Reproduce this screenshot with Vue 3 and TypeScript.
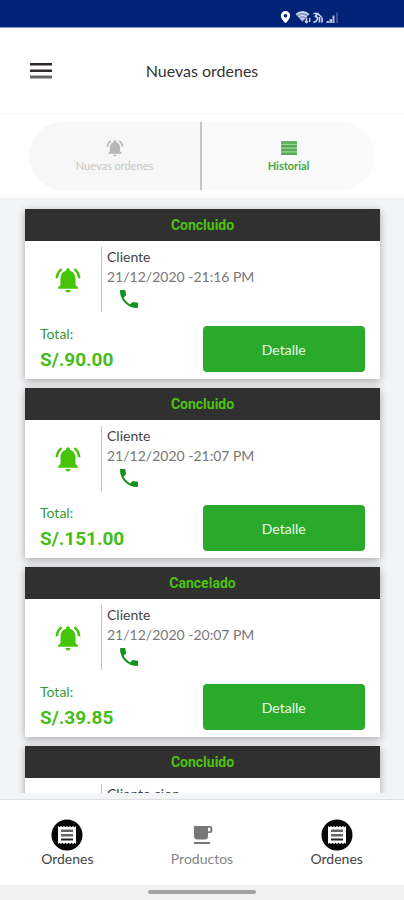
<script setup lang="ts">
import { ref } from 'vue'

interface Order {
  id: number
  status: string
  client: string
  date?: string
  total?: string
}

const orders: Order[] = [
  { id: 1, status: 'Concluido', client: 'Cliente', date: '21/12/2020 -21:16 PM', total: 'S/.90.00' },
  { id: 2, status: 'Concluido', client: 'Cliente', date: '21/12/2020 -21:07 PM', total: 'S/.151.00' },
  { id: 3, status: 'Cancelado', client: 'Cliente', date: '21/12/2020 -20:07 PM', total: 'S/.39.85' },
  { id: 4, status: 'Concluido', client: 'Cliente cion' },
]

const activeTab = ref<'new' | 'history'>('history')

const bellPath =
  'M7.58 4.08 6.15 2.65C3.75 4.48 2.17 7.3 2.03 10.5h2c.15-2.65 1.51-4.97 3.55-6.42zm12.39 6.42h2c-.15-3.2-1.73-6.02-4.12-7.85l-1.42 1.43c2.02 1.45 3.39 3.77 3.54 6.42zM18 11c0-3.07-1.64-5.64-4.5-6.32V4c0-.83-.67-1.5-1.5-1.5s-1.5.67-1.5 1.5v.68C7.63 5.36 6 7.92 6 11v5l-2 2v1h16v-1l-2-2v-5zm-6 11c.14 0 .27-.01.4-.04.65-.14 1.18-.58 1.44-1.18.1-.24.15-.5.15-.78h-4c.01 1.1.9 2 2.01 2z'
</script>

<template>
  <div class="screen">
    <div class="status-bar">
      <svg class="status-icons" viewBox="0 0 60 14" aria-hidden="true">
        <path fill="#fff" fill-rule="evenodd" d="M5.500 1a4.700 4.700 0 0 0-4.700 4.700C.8 9.200 5.500 13 5.500 13s4.700-3.800 4.700-7.300A4.700 4.700 0 0 0 5.500 1zm0 3a1.800 1.800 0 1 1 0 3.600 1.800 1.800 0 0 1 0-3.600z" />
        <path fill="#8e9ccb" d="M16 4.500q6.500-5.500 13 0L22.500 12z" />
        <g fill="none" stroke="#d5dcf0" stroke-width="1.300">
          <path d="M16 4.500q6.500-5.500 13 0M18.500 7q4-3.200 8 0M20.500 9.200q2-1.500 4 0" />
          <path d="M26.500 8v5M25 11l1.500 1.800L28 11M29.700 12V8" />
          <path stroke-width="1.600" d="M33.500 3.500h4l-2 3q3 .5 1.500 3.500t-3.500 1.500M38 4l3.500 3M39.500 7v5.500M42 12.500V7.500" />
        </g>
        <path fill="#b4bede" d="M46.500 13v-2H49v2zM49.500 13V9H52v4zM52.500 13V5.500H54.500V13z" />
        <path fill="#7080b8" d="M56.500 2.500h1V13h-1z" />
      </svg>
    </div>

    <header class="app-header">
      <button class="menu-button" type="button" aria-label="Menu">
        <svg viewBox="0 0 22 16" aria-hidden="true">
          <path fill="#2d292b" d="M0 0h22v2.500H0zM0 6.500h22V9H0z" />
          <path fill="#666" d="M0 12.500h22v3H0z" />
        </svg>
      </button>
      <h1 class="title">Nuevas ordenes</h1>
    </header>

    <div class="tabs-bar">
      <div class="tabs">
        <button class="tab" :class="{ active: activeTab === 'new' }" type="button" @click="activeTab = 'new'">
          <svg class="tab-icon" viewBox="0 0 24 24" aria-hidden="true"><path :d="bellPath" /></svg>
          <span>Nuevas ordenes</span>
        </button>
        <button class="tab" :class="{ active: activeTab === 'history' }" type="button" @click="activeTab = 'history'">
          <svg class="tab-icon" viewBox="0 0 24 24" aria-hidden="true">
            <path opacity=".55" d="M2.500 4h19v16h-19z" />
            <path d="M2.500 4h19v3h-19zM2.500 8.500h19v3h-19zM2.500 13h19v3h-19zM2.500 17.500h19v3h-19z" />
          </svg>
          <span>Historial</span>
        </button>
      </div>
    </div>

    <main class="list">
      <article v-for="order in orders" :key="order.id" class="card">
        <h2 class="card-status">{{ order.status }}</h2>
        <div class="card-body">
          <div class="summary">
            <div class="bell">
              <svg v-if="order.date" viewBox="0 0 24 24" aria-hidden="true"><path :d="bellPath" /></svg>
            </div>
            <div class="info">
              <span class="client">{{ order.client }}</span>
              <template v-if="order.date">
                <span class="date">{{ order.date }}</span>
                <button class="call" type="button" aria-label="Llamar">
                  <svg viewBox="0 0 24 24" aria-hidden="true">
                    <path d="M6.620 10.790c1.440 2.830 3.760 5.140 6.590 6.590l2.200-2.200c.27-.27.67-.36 1.020-.24 1.120.37 2.330.57 3.570.57.55 0 1 .45 1 1V20c0 .55-.45 1-1 1-9.390 0-17-7.610-17-17 0-.55.45-1 1-1h3.500c.55 0 1 .45 1 1 0 1.250.2 2.450.57 3.570.11.35.03.74-.25 1.020l-2.200 2.200z" />
                  </svg>
                </button>
              </template>
            </div>
          </div>
          <div v-if="order.total" class="checkout">
            <div class="total">
              <span class="total-label">Total:</span>
              <strong class="amount">{{ order.total }}</strong>
            </div>
            <button class="detail" type="button">Detalle</button>
          </div>
        </div>
      </article>
    </main>

    <nav class="bottom-nav">
      <a class="nav-item" href="#ordenes">
        <svg class="nav-icon" viewBox="0 0 32 32" aria-hidden="true">
          <circle cx="16" cy="16" r="15.500" fill="#080808" />
          <path fill="#fff" d="M7 7l1.500 1.200L10 7l1.500 1.200L13 7l1.500 1.200L16 7l1.500 1.200L19 7l1.500 1.200L22 7l1.500 1.200L25 7v18l-1.500-1.200L22 25l-1.500-1.200L19 25l-1.500-1.200L16 25l-1.500-1.200L13 25l-1.500-1.200L10 25l-1.500-1.200L7 25z" />
          <path fill="#666" d="M10 10.500h12v2.500H10zM10 15h12v2.500H10z" />
          <path fill="#222" d="M10 19.500h12v2H10z" />
        </svg>
        <span>Ordenes</span>
      </a>
      <a class="nav-item muted" href="#productos">
        <svg class="nav-icon" viewBox="0 0 32 32" aria-hidden="true">
          <path fill="#777" fill-rule="evenodd" d="M8 7h16a2.300 2.300 0 0 1 2.300 2.300v2.400A2.300 2.300 0 0 1 24 14h-2v3a3.500 3.500 0 0 1-3.500 3.500h-7A3.500 3.500 0 0 1 8 17zm14 1.800v3.400h2.300V8.800zM8 23h16v2H8z" />
        </svg>
        <span>Productos</span>
      </a>
      <a class="nav-item" href="#mis-ordenes">
        <svg class="nav-icon" viewBox="0 0 32 32" aria-hidden="true">
          <circle cx="16" cy="16" r="15.500" fill="#080808" />
          <path fill="#fff" d="M7 7l1.500 1.200L10 7l1.500 1.200L13 7l1.500 1.200L16 7l1.500 1.200L19 7l1.500 1.200L22 7l1.500 1.200L25 7v18l-1.500-1.200L22 25l-1.500-1.200L19 25l-1.500-1.200L16 25l-1.500-1.200L13 25l-1.500-1.200L10 25l-1.500-1.200L7 25z" />
          <path fill="#666" d="M10 10.500h12v2.500H10zM10 15h12v2.500H10z" />
          <path fill="#222" d="M10 19.500h12v2H10z" />
        </svg>
        <span>Ordenes</span>
      </a>
    </nav>

    <div class="home-bar"><span class="home-pill"></span></div>
  </div>
</template>

<style>
body {
  background: #f3f4f6;
}
</style>

<style scoped>
.screen {
  display: flex;
  flex-direction: column;
  height: 100vh;
  font-family: Lato, 'Liberation Sans', sans-serif;
  color: #444;
  background: #f3f4f6;
}

button {
  padding: 0;
  border: 0;
  background: none;
  font-family: inherit;
  cursor: pointer;
}

svg {
  display: block;
}

.status-bar {
  flex: none;
  display: flex;
  justify-content: flex-end;
  box-sizing: border-box;
  height: 28px;
  padding: 10px 64px 0 0;
  background: #002277;
  border-bottom: 1px solid #8a96c0;
}

.status-icons {
  width: 60px;
  height: 14px;
}

.app-header {
  flex: none;
  display: grid;
  grid-template-columns: 1fr auto 1fr;
  align-items: center;
  height: 85px;
  padding: 0 30px;
  background: #fff;
  border-bottom: 1px solid #f3f3f3;
}

.menu-button {
  justify-self: start;
}

.menu-button svg {
  width: 22px;
  height: 16px;
}

.title {
  margin: 0;
  font-size: 16px;
  line-height: 24px;
  font-weight: 400;
  color: #333;
}

.tabs-bar {
  flex: none;
  padding: 8px 29px;
  background: #fff;
  border-bottom: 1px solid #eeeeee;
}

.tabs {
  display: grid;
  grid-template-columns: 1fr 1fr;
  height: 68px;
  border-radius: 34px;
  background: #fafafa;
  overflow: hidden;
}

.tab {
  display: flex;
  flex-direction: column;
  align-items: center;
  justify-content: center;
  font-size: 11px;
  line-height: 16px;
  color: #c6c6c6;
  fill: #b8b8b8;
}

.tab:first-child {
  background: #f7f7f7;
  border-right: 2px solid #c4c4c4;
}

.tab.active {
  font-weight: 700;
  color: #43a847;
  fill: #55ad58;
}

.tab-icon {
  width: 20px;
  height: 20px;
}

.list {
  flex: 1;
  min-height: 0;
  display: flex;
  flex-direction: column;
  gap: 9px;
  padding: 10px 24px 0 25px;
  margin-bottom: 6px;
  overflow: hidden;
}

.card {
  flex: none;
  background: #fff;
  box-shadow: 0 2px 8px rgba(0, 0, 0, 0.32);
}

.card-status {
  margin: 0;
  font-family: Roboto, 'Liberation Sans', sans-serif;
  font-size: 14px;
  line-height: 32px;
  font-weight: 700;
  text-align: center;
  color: #4bc30f;
  background: #303030;
}

.card-body {
  display: flex;
  flex-direction: column;
  gap: 14px;
  padding: 6px 15px 7px 9px;
}

.summary {
  display: grid;
  grid-template-columns: 67px 1fr;
  height: 65px;
}

.bell {
  display: flex;
  align-items: center;
  justify-content: center;
}

.bell svg {
  width: 30px;
  height: 30px;
  fill: #45c409;
}

.info {
  display: flex;
  flex-direction: column;
  align-items: flex-start;
  padding-left: 5px;
  border-left: 1px solid #c4c4c4;
  font-size: 14px;
  line-height: 20px;
}

.client {
  color: #444;
}

.date {
  color: #777;
}

.call {
  margin-left: 10px;
}

.call svg {
  width: 24px;
  height: 24px;
  fill: #14941d;
}

.checkout {
  display: grid;
  grid-template-columns: 1fr 1fr;
  align-items: center;
  padding-left: 6px;
}

.total {
  display: flex;
  flex-direction: column;
  gap: 6px;
  font-size: 14px;
  line-height: 16px;
  color: #35993a;
}

.amount {
  font-family: Roboto, 'Liberation Sans', sans-serif;
  font-size: 19px;
  line-height: 24px;
  font-weight: 700;
  color: #45bd18;
}

.detail {
  height: 46px;
  border-radius: 4px;
  font-size: 14px;
  color: #eafbea;
  background: #29aa2b;
}

.bottom-nav {
  flex: none;
  display: grid;
  grid-template-columns: repeat(3, 1fr);
  padding: 19px 0 18px;
  background: #fff;
  border-top: 1px solid #dfe0e2;
}

.nav-item {
  display: flex;
  flex-direction: column;
  align-items: center;
  font-size: 14px;
  line-height: 16px;
  color: #444;
  text-decoration: none;
}

.nav-item.muted {
  color: #858585;
}

.nav-icon {
  width: 32px;
  height: 32px;
}

.home-bar {
  flex: none;
  display: flex;
  justify-content: center;
  padding: 5px 0 6px;
  background: #f1f1f1;
}

.home-pill {
  width: 108px;
  height: 4px;
  border-radius: 2px;
  background: #a3a3a3;
}
</style>
